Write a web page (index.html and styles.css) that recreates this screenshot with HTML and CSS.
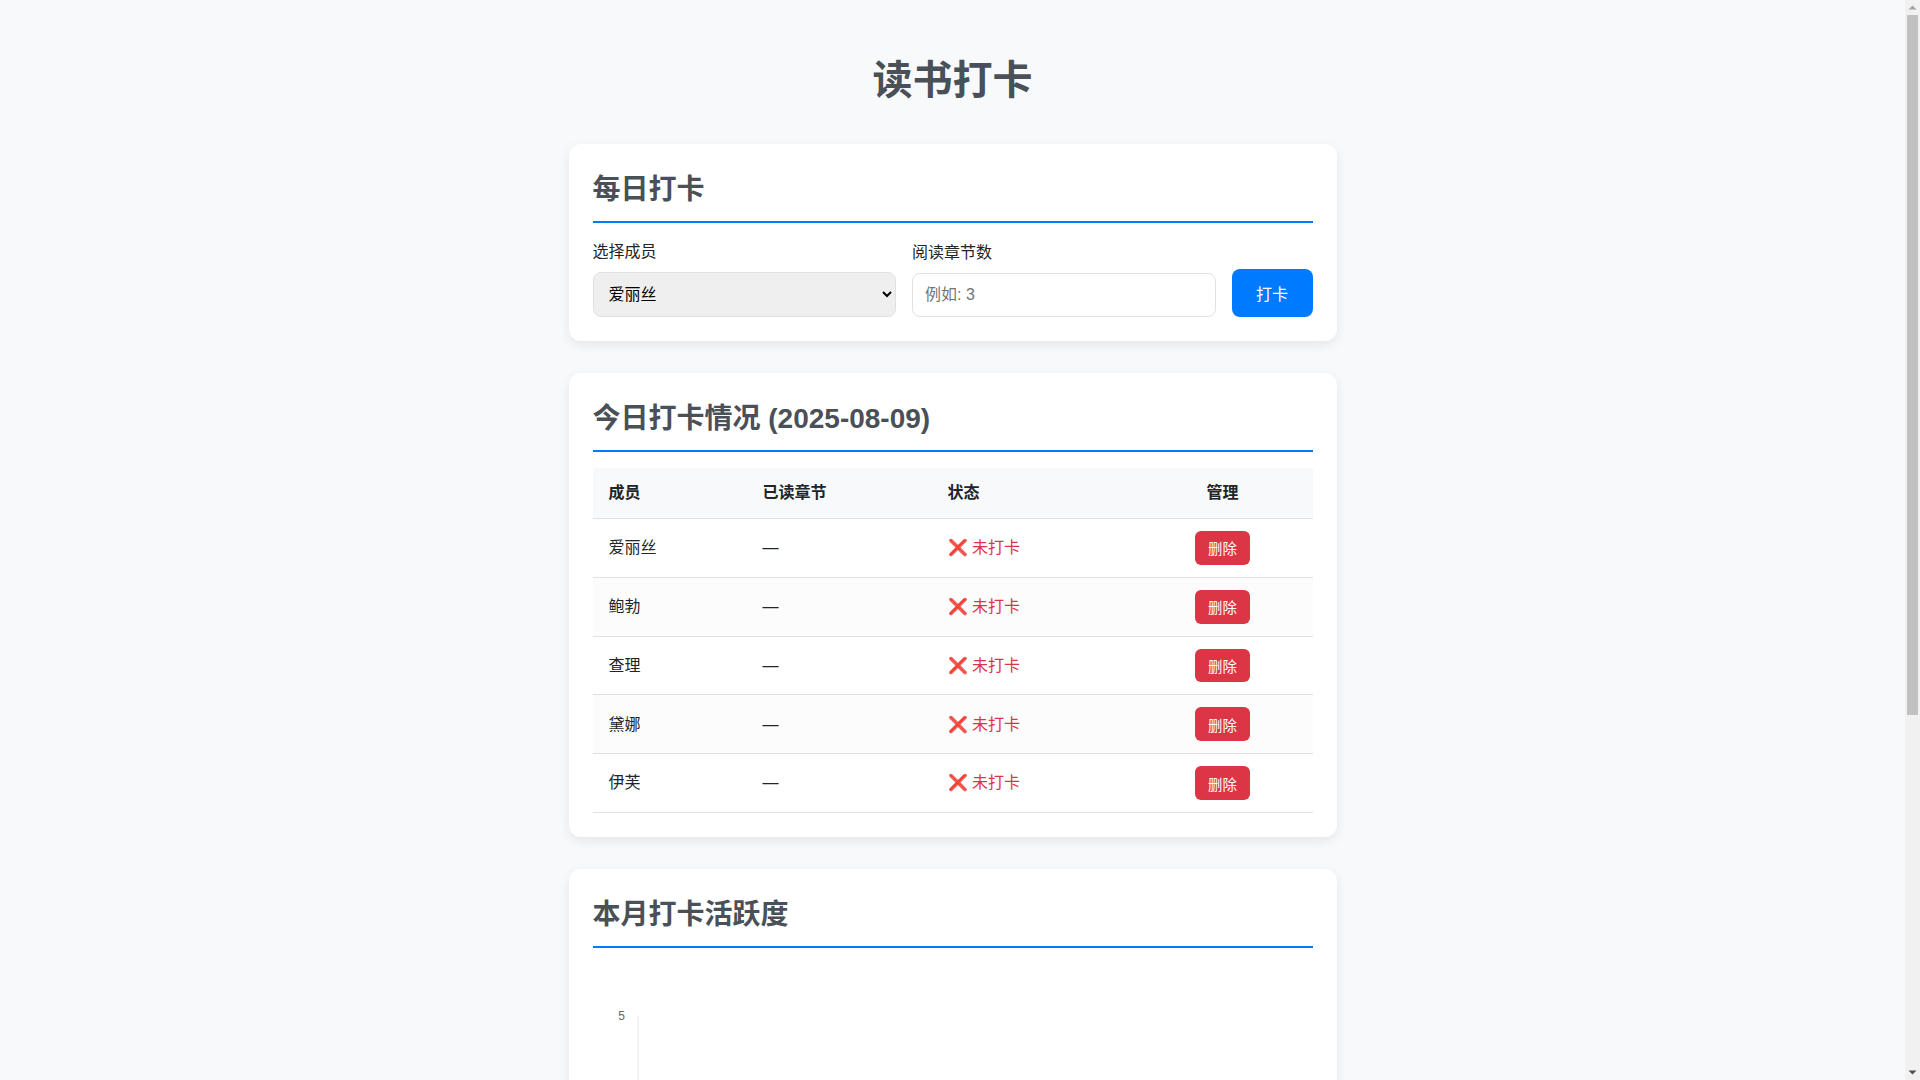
FILE: index.html
```html
<!DOCTYPE html>
<html lang="zh-CN">
<head>
<meta charset="utf-8">
<title>读书打卡</title>
<link rel="stylesheet" href="styles.css">
</head>
<body>
<div class="container">
  <h1>读书打卡</h1>
  <section class="card">
    <h2>每日打卡</h2>
    <form class="checkin-form">
      <div class="form-group">
        <label for="member">选择成员</label>
        <select id="member"><option>爱丽丝</option><option>鲍勃</option><option>查理</option><option>黛娜</option><option>伊芙</option></select>
      </div>
      <div class="form-group">
        <label for="chapters">阅读章节数</label>
        <input id="chapters" type="number" placeholder="例如: 3">
      </div>
      <button type="button" class="btn-primary">打卡</button>
    </form>
  </section>
  <section class="card">
    <h2>今日打卡情况 (2025-08-09)</h2>
    <table>
      <colgroup><col class="col-member"><col class="col-read"><col class="col-status"><col class="col-manage"></colgroup>
      <thead><tr><th>成员</th><th>已读章节</th><th>状态</th><th class="center">管理</th></tr></thead>
      <tbody>
        <tr><td>爱丽丝</td><td>—</td><td class="status">❌ 未打卡</td><td class="center"><button type="button" class="btn-delete">删除</button></td></tr>
        <tr><td>鲍勃</td><td>—</td><td class="status">❌ 未打卡</td><td class="center"><button type="button" class="btn-delete">删除</button></td></tr>
        <tr><td>查理</td><td>—</td><td class="status">❌ 未打卡</td><td class="center"><button type="button" class="btn-delete">删除</button></td></tr>
        <tr><td>黛娜</td><td>—</td><td class="status">❌ 未打卡</td><td class="center"><button type="button" class="btn-delete">删除</button></td></tr>
        <tr><td>伊芙</td><td>—</td><td class="status">❌ 未打卡</td><td class="center"><button type="button" class="btn-delete">删除</button></td></tr>
      </tbody>
    </table>
  </section>
  <section class="card">
    <h2>本月打卡活跃度</h2>
    <div class="chart">
      <svg class="chart-svg" viewBox="0 0 720 551" width="720" height="551" aria-label="本月打卡活跃度图表">
        <line class="axis" x1="45" y1="52" x2="45" y2="520"/>
        <text class="tick" x="32" y="55.5" text-anchor="end">5</text>
      </svg>
    </div>
  </section>
</div>
<div class="scrollbar" aria-hidden="true">
  <svg class="scroll-arrow" viewBox="0 0 15 15" width="15" height="15"><path class="arrow-up" d="M3.5 9.5h8L7.5 5.5z"/></svg>
  <div class="scroll-track"><div class="scroll-thumb"></div></div>
  <svg class="scroll-arrow" viewBox="0 0 15 15" width="15" height="15"><path class="arrow-down" d="M3.5 5.5h8L7.5 9.5z"/></svg>
</div>
</body>
</html>
```
FILE: styles.css
```css
* { box-sizing: border-box; }
body {
  margin: 0;
  padding: 48px 31px 48px 16px;
  background: #f8f9fa;
  color: #212529;
  font-family: "Liberation Sans", Arial, "Noto Sans CJK SC", sans-serif;
  line-height: 1.6;
}
.container { max-width: 768px; margin: 0 auto; }
h1 {
  margin: 0 0 32px;
  text-align: center;
  font-size: 40px;
  color: #495057;
}
.card {
  background: #fff;
  border-radius: 12px;
  padding: 24px;
  margin-bottom: 32px;
  box-shadow: 0 4px 12px rgba(0,0,0,.08);
}
h2 {
  margin: 0 0 16px;
  padding-bottom: 8px;
  font-size: 28px;
  color: #495057;
  border-bottom: 2px solid #007bff;
}
.checkin-form { display: flex; gap: 16px; align-items: flex-end; }
.form-group { flex: 1; min-width: 0; }
label { display: block; margin-bottom: 8px; }
select, input {
  width: 100%;
  padding: 12px 16px 12px 11px;
  font-family: inherit;
  font-size: 16px;
  border: 1px solid #dee2e6;
  border-radius: 8px;
}
input { padding-left: 12px; }
.btn-primary {
  padding: 12.4px 24.5px;
  font-family: inherit;
  font-size: 16px;
  color: #fff;
  background: #007bff;
  border: 0;
  border-radius: 8px;
}
table { width: 100%; border-collapse: collapse; table-layout: fixed; }
.col-member { width: 154px; }
.col-read { width: 185px; }
.col-status { width: 201px; }
.col-manage { width: 180px; }
th, td { padding: 12px 16px; text-align: left; border-bottom: 1px solid #dee2e6; }
th { background: #f8f9fa; font-weight: bold; }
tbody tr:nth-child(even) { background: #fcfcfc; }
.center { text-align: center; }
.status { color: #dc3545; }
.btn-delete {
  padding: 6.45px 12.8px;
  font-family: inherit;
  font-size: 14.4px;
  color: #fff;
  background: #dc3545;
  border: 0;
  border-radius: 6px;
}
.chart { height: 551px; }
.chart-svg { display: block; }
.axis { stroke: #e5e5e5; stroke-width: 1; }
.tick { font-size: 12px; fill: #666; }
.scrollbar {
  position: fixed;
  top: 0;
  right: 0;
  bottom: 0;
  width: 15px;
  display: flex;
  flex-direction: column;
  background: #f1f1f1;
}
.scroll-arrow { display: block; flex: none; }
.arrow-up { fill: #a3a3a3; }
.arrow-down { fill: #505050; }
.scroll-track { flex: 1; padding: 0 2px; }
.scroll-thumb { height: 700px; background: #c1c1c1; }
```
